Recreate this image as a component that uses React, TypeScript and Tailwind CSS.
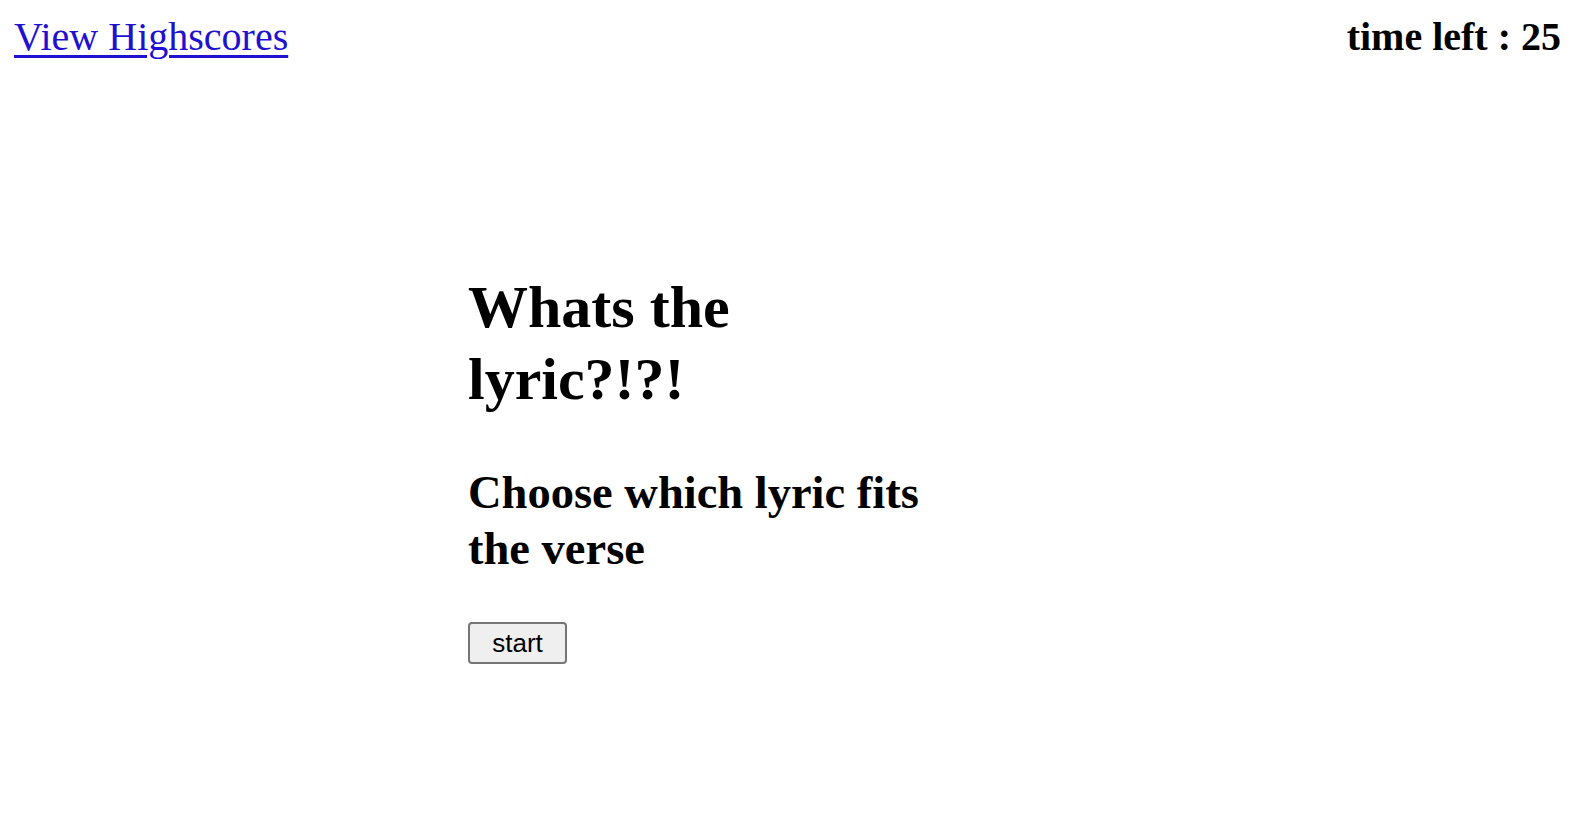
export default function App() {
  return (
    <div className="min-h-[826px] bg-white text-black font-['Liberation_Serif','Times_New_Roman',serif]">
      <header className="flex items-start justify-between pl-[14px] pr-[15px] pt-[14px]">
        <a href="#" className="text-[40px] leading-[45px] text-[#2010d0] underline decoration-[3px] underline-offset-[5px]">
          View Highscores
        </a>
        <p className="text-[40px] leading-[45px] font-bold">time left : 25</p>
      </header>

      <main className="ml-[468px] w-[480px] pt-[212px]">
        <h1 className="text-[60px] leading-[72px] font-bold">Whats the lyric?!?!</h1>
        <h2 className="mt-[50px] text-[46.5px] leading-[56px] font-bold">Choose which lyric fits the verse</h2>
        <button className="mt-[45px] w-[99px] h-[42px] rounded-[4px] border-2 border-[#767676] bg-[#efefef] text-[26px] leading-none font-['Liberation_Sans',Arial,sans-serif]">
          start
        </button>
      </main>
    </div>
  );
}
